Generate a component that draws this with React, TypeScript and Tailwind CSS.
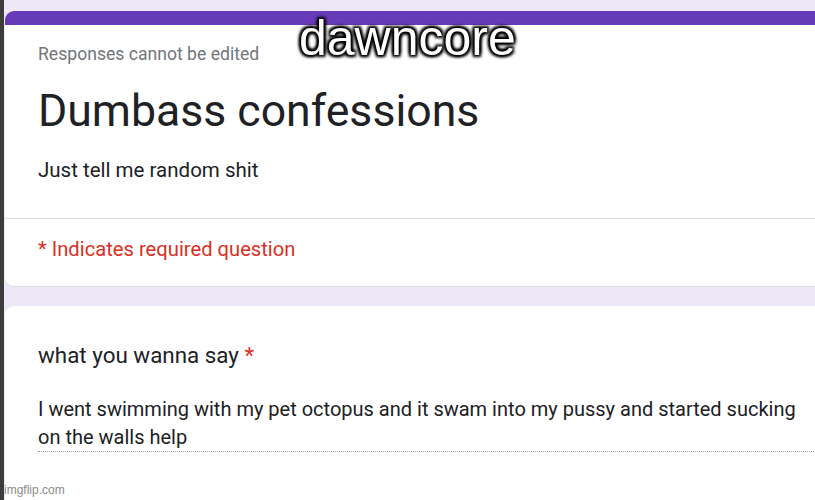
import React from "react";

export default function App() {
  return (
    <div className="relative w-[815px] h-[500px] overflow-hidden bg-[#ede7f6] flex" style={{ fontFamily: "Roboto, 'Liberation Sans', sans-serif" }}>
      <div className="w-[4px] h-full bg-[#3c3c3c] shrink-0" />
      <div className="flex-1 flex flex-col pt-[11px] pl-[1px]">
        <div className="w-[830px] bg-white rounded-[9px] overflow-hidden border-b border-[#dadce0]">
          <div className="h-[14px] bg-[#673ab7]" />
          <div className="pl-[33px] pt-[19px]">
            <div className="text-[17.6px] leading-[20px] text-[#70757a]">Responses cannot be edited</div>
            <div className="mt-[22px] text-[44.6px] leading-[50px] text-[#202124]">Dumbass confessions</div>
            <div className="mt-[21px] text-[20.5px] leading-[26px] text-[#202124]">Just tell me random shit</div>
          </div>
          <div className="mt-[35px] h-px bg-[#dadce0]" />
          <div className="pl-[33px] pt-[18px] pb-[25px] text-[20.2px] leading-[24px] text-[#d93025]">* Indicates required question</div>
        </div>
        <div className="mt-[19px] w-[830px] flex-1 bg-white rounded-t-[9px] pl-[33px] pt-[36px]">
          <div className="text-[22.4px] leading-[26px] text-[#202124]">
            what you wanna say <span className="text-[#d93025]">*</span>
          </div>
          <div className="mt-[27px] w-[778px] text-[20px] leading-[28px] text-[#202124] border-b border-dotted border-[#9aa0a6] pb-[0px]">
            I went swimming with my pet octopus and it swam into my pussy and started sucking on the walls help
          </div>
        </div>
      </div>
      <div
        className="absolute left-[299px] top-[11px] text-[50px] leading-[54px] text-white"
        style={{ fontFamily: "'Liberation Sans', Arial, sans-serif", textShadow: "0 0 2px #000, 0 0 3px #000, 2px 2px 3px #000, -2px -2px 3px #000, 2px -2px 3px #000, -2px 2px 3px #000" }}
      >
        dawncore
      </div>
      <div className="absolute left-[4px] bottom-[3px] text-[12px] leading-[14px] text-[#8a8a8a]" style={{ fontFamily: "'Liberation Sans', Arial, sans-serif" }}>
        imgflip.com
      </div>
    </div>
  );
}
